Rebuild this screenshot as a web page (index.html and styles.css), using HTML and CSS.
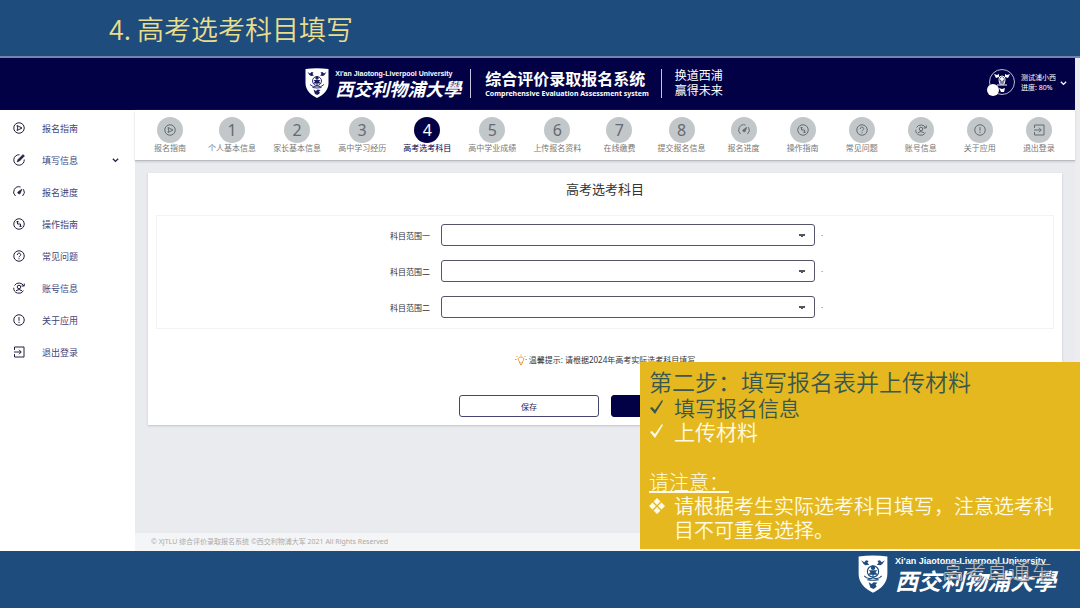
FILE: index.html
```html
<!DOCTYPE html>
<html lang="zh-CN">
<head>
<meta charset="utf-8">
<meta name="viewport" content="width=device-width, initial-scale=1">
<title>高考选考科目填写</title>
<link rel="stylesheet" href="styles.css">
</head>
<body>
<svg class="sprite" aria-hidden="true">
  <symbol id="shield" viewBox="0 0 48 60">
    <path fill="#fff" d="M1 2Q24-1 47 2V30C47 45 36 54 24 60 12 54 1 45 1 30Z"/>
    <g fill="currentColor">
      <path d="M5 8l5 3 3-3 4 1-2 3 3 3-6 1-3-2z"/>
      <path d="M43 8l-5 3-3-3-4 1 2 3-3 3 6 1 3-2z"/>
      <path d="M17 43l5 3 3-3 6 1-3 3 2 3-5 4-5-2z"/>
      <circle cx="24" cy="20" r="3.500"/>
      <path d="M17 24h14l-3 3 4 4H16l4-4z"/>
    </g>
    <g fill="none" stroke="currentColor" stroke-width="1.800">
      <circle cx="24" cy="26" r="9"/>
      <path d="M10 33q6 7 14 3 8 4 14-3M15 39q9 2 18 0M24 28v8"/>
    </g>
  </symbol>
  <symbol id="play" viewBox="0 0 24 24"><circle cx="12" cy="12" r="10.500"/><path d="M8 7l10 5-10 5 1.500-5z"/></symbol>
  <symbol id="edit" viewBox="0 0 24 24"><path d="M13 1.500A10.500 10.500 0 1 0 22.500 11"/><path fill="currentColor" stroke-width="1" d="M8 16l2-5L20 1l3 3L13 14z"/></symbol>
  <symbol id="gauge" viewBox="0 0 24 24"><path d="M5 20A10.500 10.500 0 0 1 15 2M21 6.500A10.500 10.500 0 0 1 19 20"/><path fill="currentColor" stroke-width="1" d="M18 6l-3.500 9a3 3 0 0 1-5-3z"/></symbol>
  <symbol id="guide" viewBox="0 0 24 24"><circle cx="12" cy="12" r="10.500"/><path d="M9 6v6M6.500 8.500L9 6l2.500 2.500M15 18v-6M12.500 15.500L15 18l2.500-2.500M9 12h6"/></symbol>
  <symbol id="help" viewBox="0 0 24 24"><circle cx="12" cy="12" r="10.500"/><path d="M8.500 10c0-5 7-5 7-.5 0 2.500-3.500 2.500-3.500 5M12 16.500v2"/></symbol>
  <symbol id="account" viewBox="0 0 24 24"><path d="M21.500 8A10.500 10.500 0 0 0 3 7M1.500 11.500A10.500 10.500 0 0 0 21 17.500M17 8h5.500V3M6 17.500q6-5 12 0"/><circle cx="12" cy="10" r="3.500"/></symbol>
  <symbol id="about" viewBox="0 0 24 24"><circle cx="12" cy="12" r="10.500"/><path d="M12 6v7.500M12 15.500v2.500"/></symbol>
  <symbol id="exit" viewBox="0 0 24 24"><path d="M3 8V2h19v20H3v-6M2 12h14M12 7.500l4.500 4.500-4.500 4.500"/></symbol>
</svg>
<div class="slide">
  <h1 class="slide-title">4. 高考选考科目填写</h1>

  <div class="app">
    <header class="topbar">
      <div class="logo">
        <svg class="logo-shield"><use href="#shield"/></svg>
        <div>
          <div class="logo-en">Xi'an Jiaotong-Liverpool University</div>
          <div class="logo-zh">西交利物浦大學</div>
        </div>
      </div>
      <div class="system">
        <div class="system-zh">综合评价录取报名系统</div>
        <div class="system-en">Comprehensive Evaluation Assessment system</div>
      </div>
      <div class="motto">换道西浦<br>赢得未来</div>
      <button class="user" type="button">
        <svg class="avatar" viewBox="0 0 30 30">
          <circle cx="15" cy="14" r="12.500" fill="none" stroke="#b9bbd6"/>
          <g fill="#fff"><path d="M7 6l3 1 2-1v3l-3 1zM23 6l-3 1-2-1v3l3 1zM12 20l3 1 3-1-1 4h-3z"/><circle cx="15" cy="11" r="2"/></g>
          <path d="M10 17h10M12 14h6M12 11q0-3 3-3t3 3-1 5h-4q-1-2-1-5" fill="none" stroke="#fff"/>
          <circle cx="6" cy="22" r="6" fill="#fff"/>
        </svg>
        <span class="user-text">测试浦小西<br>进度: 80%</span>
        <svg class="chevron" viewBox="0 0 8 8"><path d="M1 2l3 3 3-3"/></svg>
      </button>
    </header>

    <div class="workspace">
      <nav class="sidebar">
        <a href="#"><svg class="icon"><use href="#play"/></svg>报名指南</a>
        <a href="#"><svg class="icon"><use href="#edit"/></svg>填写信息<svg class="chevron" viewBox="0 0 8 8"><path d="M1 2l3 3 3-3"/></svg></a>
        <a href="#"><svg class="icon"><use href="#gauge"/></svg>报名进度</a>
        <a href="#"><svg class="icon"><use href="#guide"/></svg>操作指南</a>
        <a href="#"><svg class="icon"><use href="#help"/></svg>常见问题</a>
        <a href="#"><svg class="icon"><use href="#account"/></svg>账号信息</a>
        <a href="#"><svg class="icon"><use href="#about"/></svg>关于应用</a>
        <a href="#"><svg class="icon"><use href="#exit"/></svg>退出登录</a>
      </nav>

      <div class="content">
        <nav class="steps">
          <a href="#"><span class="bubble"><svg class="icon"><use href="#play"/></svg></span>报名指南</a>
          <a href="#"><span class="bubble">1</span>个人基本信息</a>
          <a href="#"><span class="bubble">2</span>家长基本信息</a>
          <a href="#"><span class="bubble">3</span>高中学习经历</a>
          <a href="#" class="current" aria-current="step"><span class="bubble">4</span>高考选考科目</a>
          <a href="#"><span class="bubble">5</span>高中学业成绩</a>
          <a href="#"><span class="bubble">6</span>上传报名资料</a>
          <a href="#"><span class="bubble">7</span>在线缴费</a>
          <a href="#"><span class="bubble">8</span>提交报名信息</a>
          <a href="#"><span class="bubble"><svg class="icon"><use href="#gauge"/></svg></span>报名进度</a>
          <a href="#"><span class="bubble"><svg class="icon"><use href="#guide"/></svg></span>操作指南</a>
          <a href="#"><span class="bubble"><svg class="icon"><use href="#help"/></svg></span>常见问题</a>
          <a href="#"><span class="bubble"><svg class="icon"><use href="#account"/></svg></span>账号信息</a>
          <a href="#"><span class="bubble"><svg class="icon"><use href="#about"/></svg></span>关于应用</a>
          <a href="#"><span class="bubble"><svg class="icon"><use href="#exit"/></svg></span>退出登录</a>
        </nav>

        <main class="card">
          <h2>高考选考科目</h2>
          <form>
            <div class="fields">
              <div class="field"><label for="s1">科目范围一</label><select id="s1"><option></option></select><span class="mark">·</span></div>
              <div class="field"><label for="s2">科目范围二</label><select id="s2"><option></option></select><span class="mark">·</span></div>
              <div class="field"><label for="s3">科目范围二</label><select id="s3"><option></option></select><span class="mark">·</span></div>
            </div>
            <p class="tip">
              <svg class="bulb" viewBox="0 0 24 24"><path d="M9 18v-3c-5-4-2-9 3-9s8 5 3 9v3zM10 21h4M12 1v2M3 4l2 2M21 4l-2 2M0 11h3M21 11h3"/></svg>
              温馨提示: 请根据2024年高考实际选考科目填写
            </p>
            <div class="actions">
              <button type="button" class="save">保存</button>
              <button type="submit" class="next"></button>
            </div>
          </form>
        </main>

        <footer class="copyright">© XJTLU 综合评价录取报名系统 ©西交利物浦大军 2021 All Rights Reserved</footer>
      </div>
    </div>

    <aside class="callout">
      <h2>第二步：填写报名表并上传材料</h2>
      <ul class="tasks">
        <li class="done"><svg viewBox="0 0 16 16"><path d="M1 9l2-1 3 3 7-10 1 1-8 13z"/></svg>填写报名信息</li>
        <li><svg viewBox="0 0 16 16"><path d="M1 9l2-1 3 3 7-10 1 1-8 13z"/></svg>上传材料</li>
      </ul>
      <p class="notice">请注意：</p>
      <ul class="notes">
        <li><svg viewBox="0 0 16 16"><path d="M8 0l3.500 3.500L8 7 4.500 3.500zM8 9l3.500 3.500L8 16l-3.500-3.500zM3.500 4.500L7 8l-3.500 3.500L0 8zM12.500 4.500L16 8l-3.500 3.500L9 8z"/></svg><span>请根据考生实际选考科目填写，注意选考科目不可重复选择。</span></li>
      </ul>
    </aside>
  </div>

  <footer class="slide-footer">
    <div class="logo large">
      <svg class="logo-shield"><use href="#shield"/></svg>
      <div>
        <div class="logo-en">Xi'an Jiaotong-Liverpool University</div>
        <div class="logo-zh">西交利物浦大學</div>
      </div>
      <span class="watermark">高考直通车</span>
    </div>
  </footer>
</div>
</body>
</html>
```
FILE: styles.css
```css
* { box-sizing: border-box; }

body {
  margin: 0;
  background: #1d4c7d;
  color: #333;
  font-family: "Noto Sans", "Noto Sans CJK SC", sans-serif;
}

h1, h2, p, ul { margin: 0; padding: 0; font-weight: 350; }
ul { list-style: none; }
a { color: inherit; text-decoration: none; }
button, select { font: inherit; }

.sprite { position: absolute; width: 0; height: 0; }

.slide { display: flex; flex-direction: column; min-height: 100vh; }

.slide-title {
  height: 56px;
  padding: 3px 109px 0;
  color: #eadd8c;
  font-family: "Noto Sans CJK SC", sans-serif;
  font-size: 27px;
  line-height: 52px;
}

.app {
  position: relative;
  display: flex;
  flex: 1;
  flex-direction: column;
  padding-right: 5px;
  border-top: 2px solid #7186ae;
  background: #ededf0;
}

/* Header */
.topbar {
  display: flex;
  align-items: center;
  height: 52px;
  padding: 0 0 2px 28.4%;
  background: #020145;
  color: #fff;
}

.logo { position: relative; display: flex; align-items: center; gap: 6px; color: #1b1c60; }
.logo > div { color: #fff; }
.logo-shield { width: 24px; height: 30px; }
.logo-en { font: bold 7px/9px "Liberation Sans", sans-serif; white-space: nowrap; }
.logo-zh { font: italic 700 18px/20px "Noto Sans CJK SC", sans-serif; white-space: nowrap; }

.system { margin-left: 9px; padding: 0 12px 0 14px; border: solid #c4c4da; border-width: 0 1px; white-space: nowrap; }
.system-zh { font-size: 16px; font-weight: 700; line-height: 20px; }
.system-en { font-size: 7px; font-weight: 700; line-height: 9px; }

.motto { margin-left: 13px; font-size: 12px; line-height: 15px; white-space: nowrap; }

.user {
  display: flex;
  align-items: center;
  gap: 4px;
  margin-left: auto;
  padding: 0 8px 0 0;
  border: 0;
  background: none;
  color: #fff;
  font-size: 7px;
  line-height: 10px;
  text-align: left;
}
.avatar { width: 30px; height: 30px; }

.chevron { width: 7px; height: 7px; fill: none; stroke: currentColor; stroke-width: 1.5; }

/* Work area */
.workspace { display: flex; flex: 1; }

.icon { width: 12px; height: 12px; fill: none; stroke: currentColor; stroke-width: 2; }

.sidebar { width: 135px; flex: none; padding-top: 2px; background: #fff; color: #45447a; font-size: 9px; }
.sidebar a { display: flex; align-items: center; height: 32px; padding: 0 16px 0 13px; }
.sidebar .icon { margin-right: 17px; color: #22213f; }
.sidebar .chevron { margin-left: auto; color: #22213f; }

.content { display: flex; flex: 1; flex-direction: column; min-width: 0; background: #e9ebef; }

.steps {
  display: flex;
  justify-content: space-between;
  height: 51px;
  padding: 7px 15px 0 14px;
  border-bottom: 1px solid #b9bcc2;
  background: #fff;
  box-shadow: 0 1px 2px #c9ccd2;
  color: #777;
  font-size: 8px;
  line-height: 10px;
}
.steps a { display: flex; flex-direction: column; align-items: center; min-width: 42px; white-space: nowrap; }
.bubble {
  display: grid;
  place-items: center;
  width: 26px;
  height: 26px;
  border-radius: 50%;
  background: #c2c7ca;
  color: #666b70;
  font-size: 16px;
  line-height: 26px;
}
.current { color: #020145; }
.current .bubble { background: #020145; color: #fff; }

.card {
  margin: 12px 13px 0;
  padding: 7px 8px 8px;
  background: #fff;
  box-shadow: 0 1px 2px #c0c3c9;
}
.card h2 { font-size: 13px; font-weight: 400; line-height: 18px; text-align: center; }

.fields {
  display: grid;
  gap: 14px;
  margin-top: 17px;
  padding: 8px 0 10px;
  border: 1px solid #f3f3f5;
}
.field { display: grid; grid-template-columns: 278px minmax(0, 374px) 1fr; align-items: center; column-gap: 6px; font-size: 8px; }
.field label { padding-right: 5px; text-align: right; }
.field select {
  height: 22px;
  border: 1px solid #55556a;
  border-radius: 3px;
  appearance: none;
  background:
    conic-gradient(from -45deg at 50% 100%, #555 90deg, transparent 0) right 9px center / 6px 3px no-repeat,
    #fff;
  background:
    conic-gradient(from -60deg at 50% 100%, #555 120deg, transparent 0) right 9px center / 6px 3px no-repeat,
    #fff;
}
.mark { color: #777; }

.tip { display: flex; align-items: center; justify-content: center; gap: 2px; margin-top: 24px; font-size: 8px; font-weight: 400; line-height: 14px; }
.bulb { width: 12px; height: 12px; fill: none; stroke: #e2963e; stroke-width: 2; }

.actions { display: flex; justify-content: center; gap: 12px; margin-top: 28px; }
.actions button { width: 140px; height: 22px; padding: 0; border: 1px solid #45466f; border-radius: 3px; font-size: 8px; }
.save { background: #fff; color: #1d1c63; }
.actions .next { border-color: #020145; background: #020145; }

.copyright { margin-top: auto; padding: 0 16px; background: #f4f5f6; color: #aaa; font-size: 7px; line-height: 18px; }

/* Callout panel */
.callout {
  position: absolute;
  right: 0;
  bottom: 2px;
  width: 440px;
  padding: 6px 13px 7px 9px;
  background: #e5b81f;
  color: #fffbe6;
  font-family: "Noto Sans CJK SC", sans-serif;
  font-size: 20px;
  font-weight: 300;
  line-height: 24px;
}
.callout h2 { color: #37574f; font-size: 23px; line-height: 27px; white-space: nowrap; }
.callout li { display: flex; gap: 9px; }
.callout svg { flex: none; width: 16px; height: 16px; margin-top: 4px; fill: currentColor; }
.tasks { font-size: 21px; font-weight: 350; }
.tasks .done { color: #37574f; }
.notice { margin-top: 27px; font-weight: 300; text-decoration: underline; }

/* Slide footer */
.slide-footer { display: flex; justify-content: flex-end; height: 57px; padding: 4px 24px 0 0; }
.large { align-self: flex-start; gap: 7px; color: #1d4c7d; }
.large .logo-shield { width: 30px; height: 38px; }
.large .logo-en { font-size: 9px; line-height: 12px; }
.large .logo-zh { font-size: 23px; line-height: 26px; }
.watermark {
  position: absolute;
  top: 0;
  right: 4px;
  color: #b3b7be;
  font-size: 22px;
  font-weight: 300;
  line-height: 30px;
  text-shadow: 1px 1px 1px #3a4a60;
}
```
